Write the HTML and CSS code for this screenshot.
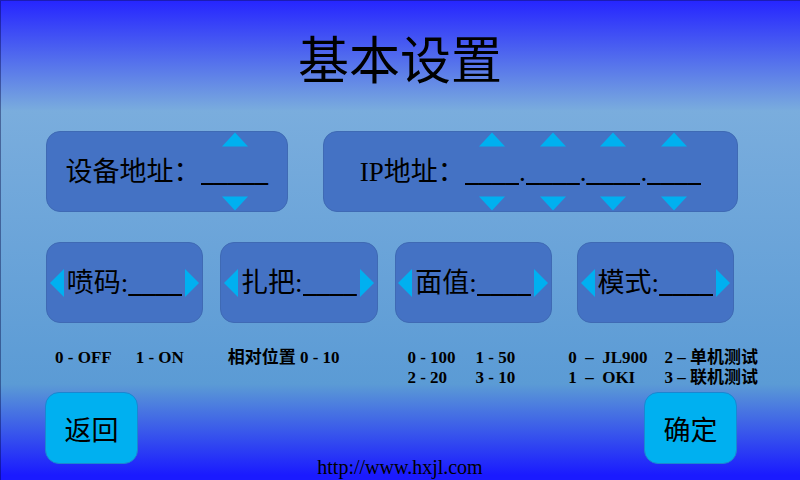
FILE: index.html
```html
<!DOCTYPE html>
<html lang="zh-CN">
<head>
<meta charset="utf-8">
<title>基本设置</title>
<link rel="stylesheet" href="styles.css">
</head>
<body>
<form class="screen">
  <h1 class="title">基本设置</h1>

  <div class="addresses">
    <div class="card">
      <label for="device">设备地址：</label>
      <div class="stepper">
        <button type="button" class="arrow" aria-label="+"><svg class="tri-v" viewBox="0 0 26 14"><path d="M13 0 26 14H0z"/></svg></button>
        <input id="device" class="value value-5" value="_____">
        <button type="button" class="arrow" aria-label="-"><svg class="tri-v" viewBox="0 0 26 14"><path d="M0 0H26L13 14z"/></svg></button>
      </div>
    </div>
    <div class="card">
      <label for="ip1">IP地址：</label>
      <div class="stepper">
        <button type="button" class="arrow" aria-label="+"><svg class="tri-v" viewBox="0 0 26 14"><path d="M13 0 26 14H0z"/></svg></button>
        <input id="ip1" class="value" value="____">
        <button type="button" class="arrow" aria-label="-"><svg class="tri-v" viewBox="0 0 26 14"><path d="M0 0H26L13 14z"/></svg></button>
      </div>
      <span class="dot">.</span>
      <div class="stepper">
        <button type="button" class="arrow" aria-label="+"><svg class="tri-v" viewBox="0 0 26 14"><path d="M13 0 26 14H0z"/></svg></button>
        <input aria-label="IP 2" class="value" value="____">
        <button type="button" class="arrow" aria-label="-"><svg class="tri-v" viewBox="0 0 26 14"><path d="M0 0H26L13 14z"/></svg></button>
      </div>
      <span class="dot">.</span>
      <div class="stepper">
        <button type="button" class="arrow" aria-label="+"><svg class="tri-v" viewBox="0 0 26 14"><path d="M13 0 26 14H0z"/></svg></button>
        <input aria-label="IP 3" class="value" value="____">
        <button type="button" class="arrow" aria-label="-"><svg class="tri-v" viewBox="0 0 26 14"><path d="M0 0H26L13 14z"/></svg></button>
      </div>
      <span class="dot">.</span>
      <div class="stepper">
        <button type="button" class="arrow" aria-label="+"><svg class="tri-v" viewBox="0 0 26 14"><path d="M13 0 26 14H0z"/></svg></button>
        <input aria-label="IP 4" class="value" value="____">
        <button type="button" class="arrow" aria-label="-"><svg class="tri-v" viewBox="0 0 26 14"><path d="M0 0H26L13 14z"/></svg></button>
      </div>
    </div>
  </div>

  <div class="options">
    <div class="card option">
      <button type="button" class="arrow" aria-label="-"><svg class="tri-h" viewBox="0 0 14 28"><path d="M14 0V28L0 14z"/></svg></button>
      <div class="field"><label for="print">喷码:</label><input id="print" class="value" value="____"></div>
      <button type="button" class="arrow" aria-label="+"><svg class="tri-h" viewBox="0 0 14 28"><path d="M0 0 14 14 0 28z"/></svg></button>
    </div>
    <div class="card option">
      <button type="button" class="arrow" aria-label="-"><svg class="tri-h" viewBox="0 0 14 28"><path d="M14 0V28L0 14z"/></svg></button>
      <div class="field"><label for="bundle">扎把:</label><input id="bundle" class="value" value="____"></div>
      <button type="button" class="arrow" aria-label="+"><svg class="tri-h" viewBox="0 0 14 28"><path d="M0 0 14 14 0 28z"/></svg></button>
    </div>
    <div class="card option">
      <button type="button" class="arrow" aria-label="-"><svg class="tri-h" viewBox="0 0 14 28"><path d="M14 0V28L0 14z"/></svg></button>
      <div class="field"><label for="amount">面值:</label><input id="amount" class="value" value="____"></div>
      <button type="button" class="arrow" aria-label="+"><svg class="tri-h" viewBox="0 0 14 28"><path d="M0 0 14 14 0 28z"/></svg></button>
    </div>
    <div class="card option mode">
      <button type="button" class="arrow" aria-label="-"><svg class="tri-h" viewBox="0 0 14 28"><path d="M14 0V28L0 14z"/></svg></button>
      <div class="field"><label for="mode">模式:</label><input id="mode" class="value" value="____"></div>
      <button type="button" class="arrow" aria-label="+"><svg class="tri-h" viewBox="0 0 14 28"><path d="M0 0 14 14 0 28z"/></svg></button>
    </div>
  </div>

  <div class="hints">
    <div class="hint hint-wide"><span>0 - OFF</span><span>1 - ON</span></div>
    <div class="hint"><span>相对位置 0 - 10</span></div>
    <div class="hint"><span>0 - 100</span><span>1 - 50</span><span>2 - 20</span><span>3 - 10</span></div>
    <div class="hint hint-mode"><span>0  –  JL900</span><span>2 – 单机测试</span><span>1  –  OKI</span><span>3 – 联机测试</span></div>
  </div>

  <footer class="footer">
    <button type="button" class="action">返回</button>
    <a class="site" href="http://www.hxjl.com">http://www.hxjl.com</a>
    <button type="submit" class="action confirm">确定</button>
  </footer>
</form>
</body>
</html>
```
FILE: styles.css
```css
* {
  box-sizing: border-box;
}

body {
  margin: 0;
  color: #000;
  font-family: "Liberation Serif", "Noto Sans CJK SC", serif;
  font-size: 27px;
  font-weight: 400;
}

.screen {
  display: flex;
  flex-direction: column;
  min-height: 100vh;
  border-top: 1px solid #1c1cb4;
  background: linear-gradient(#2626ff 0%, #7aaddd 23%, #5b9bd5 80%, #1a1aff 99%);
  box-shadow: inset 1px 0 rgba(0, 0, 60, 0.4);
}

.title {
  margin: 0;
  padding-top: 25px;
  height: 130px;
  font-size: 51px;
  font-weight: 400;
  line-height: 72px;
  text-align: center;
}

.addresses {
  display: grid;
  grid-template-columns: 242fr 415fr;
  gap: 35px;
  padding: 0 62px 0 46px;
}

.card {
  display: flex;
  align-items: center;
  justify-content: center;
  height: 81px;
  border: 1px solid #3f6ab4;
  border-radius: 14px;
  background: #4472c4;
  line-height: 40px;
  white-space: nowrap;
}

.stepper {
  display: flex;
  flex-direction: column;
  align-items: center;
  justify-content: space-between;
  height: 100%;
}

.arrow {
  display: block;
  padding: 0;
  border: 0;
  background: none;
}

.arrow svg {
  display: block;
  fill: #00b0f0;
}

.tri-v {
  width: 26px;
  height: 15px;
}

.tri-h {
  width: 14px;
  height: 28px;
}

.value {
  width: 54px;
  height: 40px;
  padding: 0;
  border: 0;
  background: none;
  color: inherit;
  font: inherit;
  font-weight: 700;
}

.value-5 {
  width: 68px;
}

.options {
  display: flex;
  gap: 17px;
  padding: 30px 66px 0 46px;
}

.option {
  flex: 1;
  gap: 3px;
}

.mode {
  margin-left: 8px;
}

.field {
  display: flex;
  align-items: center;
}

.hints {
  display: grid;
  grid-template-columns: 173fr 178fr 161fr 191fr;
  padding: 25px 42px 0 55px;
  font-size: 17px;
  font-weight: 700;
  line-height: 20px;
  white-space: pre;
}

.hint {
  display: grid;
  grid-template-columns: auto auto;
  align-content: start;
  justify-content: start;
  column-gap: 20px;
}

.hint-wide {
  column-gap: 24px;
}

.hint-mode {
  column-gap: 17px;
}

.hints > :nth-child(n + 3) {
  padding-left: 2px;
}

.footer {
  display: grid;
  grid-template-columns: 1fr auto 1fr;
  flex: 1;
  padding: 4px 45px 0;
}

.action {
  width: 93px;
  height: 72px;
  padding: 0;
  border: 1px solid #1c86d0;
  border-radius: 14px;
  background: #00b0f0;
  color: inherit;
  font: inherit;
}

.confirm {
  justify-self: end;
  margin-right: 18px;
}

.site {
  align-self: end;
  color: inherit;
  font-size: 20px;
  line-height: 26px;
  text-decoration: none;
}
```
